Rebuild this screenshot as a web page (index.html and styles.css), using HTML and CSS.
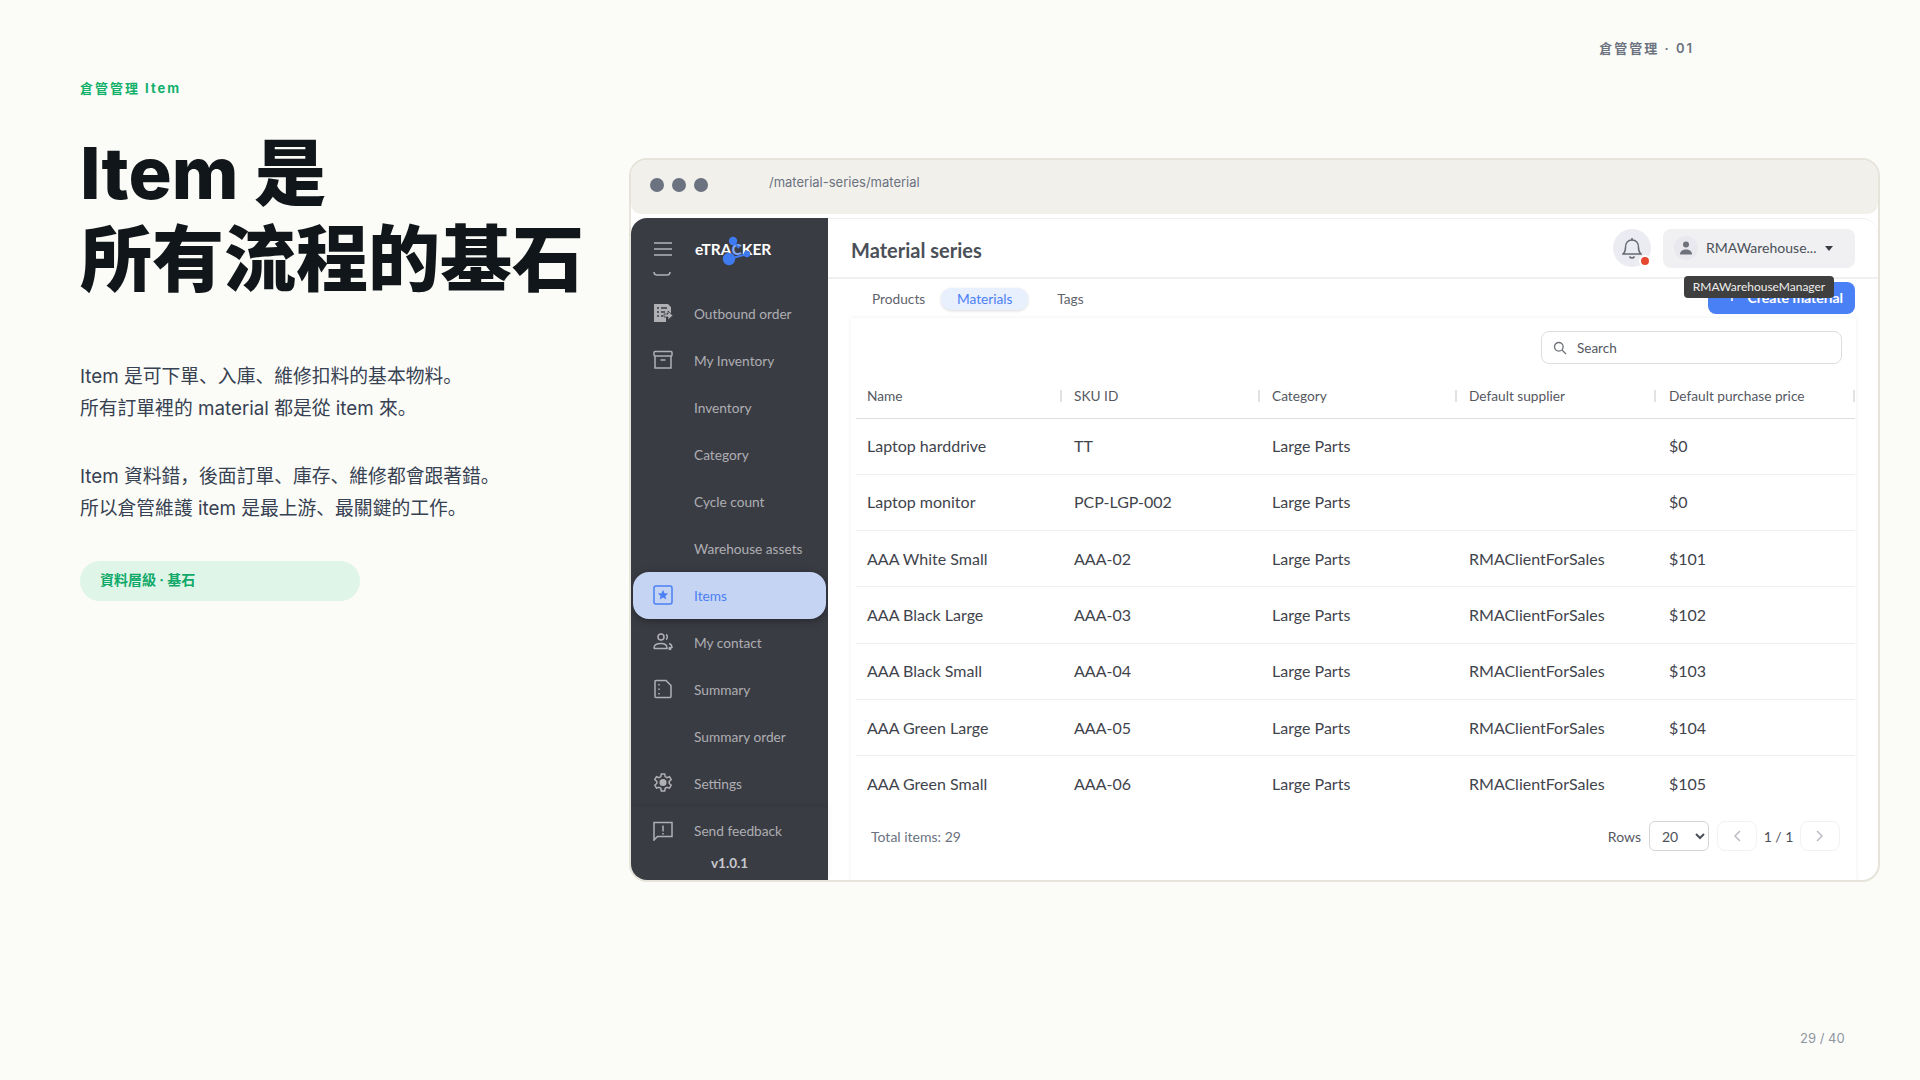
FILE: index.html
```html
<!DOCTYPE html>
<html lang="zh">
<head>
  <meta charset="UTF-8">
  <title>倉管管理 Item</title>
  <link rel="stylesheet" href="styles.css">
</head>
<body>
  <div class="slide">
    <div class="topbar">倉管管理 · 01</div>
    <div class="columns">
      <div class="intro">
        <div class="eyebrow">倉管管理 Item</div>
        <h1 class="headline">Item 是<br>所有流程的基石</h1>
        <p class="copy">Item 是可下單、入庫、維修扣料的基本物料。<br>所有訂單裡的 material 都是從 item 來。</p>
        <p class="copy">Item 資料錯，後面訂單、庫存、維修都會跟著錯。<br>所以倉管維護 item 是最上游、最關鍵的工作。</p>
        <div class="pill">資料層級 · 基石</div>
      </div>

      <div class="window">
        <div class="chrome">
          <div class="dots"><i></i><i></i><i></i></div>
          <div class="url">/material-series/material</div>
        </div>
        <div class="app">
          <aside class="sidebar">
            <div class="side-head">
              <svg class="burger" width="18" height="14" viewBox="0 0 18 14"><path d="M0 1h18M0 7h18M0 13h18" stroke="#b4b4b8" stroke-width="1.4"/></svg>
              <div class="logo">
                <span>eTRA<b class="logo-c">C</b>KER</span>
                <svg class="logo-nodes" width="40" height="36" viewBox="0 0 40 36">
                  <path d="M19 6 L25 13 M15 24 L33 19" stroke="#3f7bf0" stroke-width="2" fill="none"/>
                  <circle cx="19" cy="6" r="4.200" fill="#3f7bf0"/>
                  <circle cx="15" cy="24" r="6.200" fill="#3f7bf0"/>
                  <circle cx="33" cy="19" r="3.200" fill="#3f7bf0"/>
                </svg>
              </div>
            </div>
            <div class="nav">
              <div class="nav-clip"><svg width="18" height="6" viewBox="0 0 18 6"><path d="M1 0c0 2 1 3 3 3h10c2 0 3-1 3-3" fill="none" stroke="#b0b0b4" stroke-width="1.5"/></svg></div>
              <div class="nav-row">
                <svg class="nav-icon" viewBox="0 0 20 20"><path d="M1 1h14l3 3v6h-4v3l-1 0v6H1z" fill="#b0b0b4"/><path d="M4 5h2M8 5h6M4 9h2M8 9h4M4 13h2M8 13h2" stroke="#3a3c44" stroke-width="1.4"/><path d="M11 11h4V8l5 4.5-5 4.500V14h-4z" fill="#b0b0b4" stroke="#3a3c44" stroke-width=".8"/></svg>
                <span>Outbound order</span>
              </div>
              <div class="nav-row">
                <svg class="nav-icon" viewBox="0 0 20 20" fill="none" stroke="#b0b0b4" stroke-width="1.5"><rect x="1" y="1.500" width="18" height="4.500" rx="1"/><path d="M2 6v12h16V6M7.500 10h5"/></svg>
                <span>My Inventory</span>
              </div>
              <div class="nav-row"><span class="nav-icon"></span><span>Inventory</span></div>
              <div class="nav-row"><span class="nav-icon"></span><span>Category</span></div>
              <div class="nav-row"><span class="nav-icon"></span><span>Cycle count</span></div>
              <div class="nav-row"><span class="nav-icon"></span><span>Warehouse assets</span></div>
              <div class="nav-row active">
                <svg class="nav-icon" viewBox="0 0 20 20"><rect x="1" y="1" width="18" height="18" rx="2" fill="none" stroke="#4a80f5" stroke-width="1.500"/><path d="M10 4.800l1.500 3.400 3.700.3-2.800 2.400.9 3.600-3.300-1.900-3.300 1.900.9-3.600-2.800-2.400 3.700-.3z" fill="#4a80f5"/></svg>
                <span>Items</span>
              </div>
              <div class="nav-row">
                <svg class="nav-icon" viewBox="0 0 20 20" fill="none" stroke="#b0b0b4" stroke-width="1.500"><circle cx="8" cy="5" r="3"/><path d="M13 2.500c1.700.6 1.700 4.400 0 5"/><path d="M1 16c0-3 3-4.500 7-4.500s6 1.500 6 4.500v.500H1.500z"/><path d="M16 11.500c2 .6 3 2 3 4.500"/><circle cx="17" cy="16.500" r=".9" fill="#b0b0b4"/></svg>
                <span>My contact</span>
              </div>
              <div class="nav-row">
                <svg class="nav-icon" viewBox="0 0 20 20" fill="none" stroke="#b0b0b4" stroke-width="1.500"><path d="M2 2.500a1 1 0 0 1 1-1h10l5 5v11a1 1 0 0 1-1 1H3a1 1 0 0 1-1-1z"/><path d="M6 5v1.500M6 9.500V11M6 14v1.500"/></svg>
                <span>Summary</span>
              </div>
              <div class="nav-row"><span class="nav-icon"></span><span>Summary order</span></div>
              <div class="nav-row">
                <svg class="nav-icon" viewBox="0 0 20 20" fill="none" stroke="#b0b0b4" stroke-width="1.500"><path d="M8.300 1h3.400l.5 2.600 1.800 1 2.500-.9 1.700 3-2 1.700v2.100l2 1.700-1.700 3-2.500-.9-1.800 1-.5 2.700H8.300l-.5-2.700-1.800-1-2.500.9-1.700-3 2-1.700V8.400l-2-1.700 1.700-3 2.500.9 1.800-1z"/><circle cx="10" cy="9.500" r="2.800" fill="#b0b0b4"/></svg>
                <span>Settings</span>
              </div>
            </div>
            <div class="side-foot">
              <div class="nav-row">
                <svg class="nav-icon" viewBox="0 0 20 20" fill="none" stroke="#b0b0b4" stroke-width="1.500"><path d="M1 1.500h18v14H4.500L1 19z"/><path d="M10 4.500v6M10 12v1.500"/></svg>
                <span>Send feedback</span>
              </div>
              <div class="version">v1.0.1</div>
            </div>
          </aside>

          <main class="main">
            <header class="main-head">
              <div class="main-title">Material series</div>
              <div class="bell">
                <svg width="20" height="22" viewBox="0 0 20 22" fill="none" stroke="#666a72" stroke-width="1.500"><path d="M1 17c2-1.500 2.500-3 2.500-6.500C3.500 6 6 3 10 3s6.500 3 6.500 7.500c0 3.500.5 5 2.500 6.500z"/><path d="M10 1v2M7.500 19.500c.6 1 1.500 1.500 2.500 1.500s1.900-.5 2.500-1.500"/></svg>
                <i class="bell-dot"></i>
              </div>
              <div class="user-wrap">
                <div class="user">
                  <span class="avatar"><svg width="14" height="14" viewBox="0 0 14 14" fill="#6f727a"><circle cx="7" cy="3.600" r="3"/><path d="M1 13.500c0-3.500 2.500-5 6-5s6 1.500 6 5z"/></svg></span>
                  <span class="user-name">RMAWarehouse...</span>
                  <span class="caret"></span>
                </div>
                <div class="tooltip">RMAWarehouseManager</div>
              </div>
            </header>

            <div class="subbar">
              <div class="tabs">
                <div class="tab">Products</div>
                <div class="tab tab-on">Materials</div>
                <div class="tab">Tags</div>
              </div>
              <div class="create"><span class="plus">+</span>Create material</div>
            </div>

            <section class="card">
              <div class="search-row">
                <div class="search">
                  <svg width="14" height="14" viewBox="0 0 14 14" fill="none" stroke="#6f727a" stroke-width="1.300"><circle cx="5.800" cy="5.800" r="4.300"/><path d="M9 9l4 4"/></svg>
                  <span>Search</span>
                </div>
              </div>
              <table class="grid">
                <colgroup><col class="c1"><col class="c2"><col class="c3"><col class="c4"><col class="c5"></colgroup>
                <thead>
                  <tr><th>Name</th><th>SKU ID</th><th>Category</th><th>Default supplier</th><th>Default purchase price</th></tr>
                </thead>
                <tbody>
                  <tr><td>Laptop harddrive</td><td>TT</td><td>Large Parts</td><td></td><td>$0</td></tr>
                  <tr><td>Laptop monitor</td><td>PCP-LGP-002</td><td>Large Parts</td><td></td><td>$0</td></tr>
                  <tr><td>AAA White Small</td><td>AAA-02</td><td>Large Parts</td><td>RMAClientForSales</td><td>$101</td></tr>
                  <tr><td>AAA Black Large</td><td>AAA-03</td><td>Large Parts</td><td>RMAClientForSales</td><td>$102</td></tr>
                  <tr><td>AAA Black Small</td><td>AAA-04</td><td>Large Parts</td><td>RMAClientForSales</td><td>$103</td></tr>
                  <tr><td>AAA Green Large</td><td>AAA-05</td><td>Large Parts</td><td>RMAClientForSales</td><td>$104</td></tr>
                  <tr><td>AAA Green Small</td><td>AAA-06</td><td>Large Parts</td><td>RMAClientForSales</td><td>$105</td></tr>
                </tbody>
              </table>
              <div class="pager">
                <div class="total">Total items: 29</div>
                <div class="rows-label">Rows</div>
                <select class="rows-select"><option>20</option></select>
                <div class="page-btn"><svg width="10" height="12" viewBox="0 0 10 12" fill="none" stroke="#bcbec4" stroke-width="1.500"><path d="M8 1L3 6l5 5"/></svg></div>
                <div class="page-num">1 / 1</div>
                <div class="page-btn"><svg width="10" height="12" viewBox="0 0 10 12" fill="none" stroke="#bcbec4" stroke-width="1.500"><path d="M2 1l5 5-5 5"/></svg></div>
              </div>
            </section>
          </main>
        </div>
      </div>
    </div>
    <div class="pagenum">29 / 40</div>
  </div>
</body>
</html>
```

FILE: styles.css
```css
* {
    box-sizing: border-box;
}

body {
    margin: 0;
    background: #fbfcf8;
    font-family: Inter, "Noto Sans CJK SC", sans-serif;
}

.slide {
    width: 1920px;
    height: 1080px;
    overflow: hidden;
    display: flex;
    flex-direction: column;
}

.topbar {
    height: 64px;
    padding: 40px 226px 0 0;
    text-align: right;
    font-size: 13px;
    line-height: 16px;
    font-weight: 600;
    letter-spacing: 2px;
    color: #6b7280;
}

.columns {
    display: flex;
    height: 974px;
    padding-left: 80px;
}

.intro {
    width: 549px;
    flex-shrink: 0;
}

.eyebrow {
    margin-top: 16px;
    font-size: 13px;
    line-height: 16px;
    font-weight: 700;
    letter-spacing: 2px;
    color: #10b06b;
}

.headline {
    margin: 34px 0 59px;
    font-size: 72px;
    line-height: 86px;
    font-weight: 800;
    color: #101619;
}

.copy {
    margin: 0 0 36px;
    font-size: 18.800px;
    line-height: 32px;
    color: #374151;
}

.pill {
    width: 280px;
    height: 40px;
    margin-top: 35px;
    padding-left: 20px;
    border-radius: 20px;
    background: #def5e8;
    font-size: 14px;
    line-height: 38px;
    font-weight: 700;
    color: #10a969;
}

/* browser frame */
.window {
    width: 1251px;
    height: 724px;
    margin-top: 94px;
    border: 2px solid #e6e3da;
    border-radius: 18px;
    background: #fff;
    overflow: hidden;
}

.chrome {
    height: 54px;
    display: flex;
    padding: 0 0 0 19px;
    background: #f2f0eb;
    border-radius: 0 0 10px 10px;
}

.dots {
    display: flex;
    gap: 8px;
    margin-top: 18px;
}

.dots i {
    width: 14px;
    height: 14px;
    border-radius: 50%;
    background: #6b7280;
}

.url {
    margin: 14px 0 0 61px;
    font-size: 13px;
    line-height: 16px;
    color: #6b7280;
}

.app {
    height: 662px;
    margin-top: 4px;
    display: flex;
    font-family: Lato, "Open Sans", sans-serif;
}

/* sidebar */
.sidebar {
    width: 197px;
    flex-shrink: 0;
    display: flex;
    flex-direction: column;
    background: #3a3c44;
    border-radius: 16px 0 0 0;
    color: #aeaeb2;
}

.side-head {
    height: 54px;
    flex-shrink: 0;
    display: flex;
    align-items: center;
    padding: 8px 0 0 23px;
}

.logo {
    position: relative;
    margin-left: 23px;
    font-size: 15.500px;
    font-weight: 700;
    color: #fff;
}

.logo-c {
    color: #7ea6f8;
}

.logo-nodes {
    position: absolute;
    left: 19px;
    top: -5px;
}

.nav {
    flex: 1;
    overflow: hidden;
}

.nav-clip {
    height: 17.500px;
    padding-left: 22px;
    line-height: 0;
}

.nav-row {
    height: 47px;
    margin: 0 2px;
    display: flex;
    align-items: center;
    gap: 21px;
    padding-left: 20px;
    font-size: 13.700px;
    border-radius: 16px;
}

.nav-icon {
    width: 20px;
    height: 20px;
    flex-shrink: 0;
}

.nav-row.active {
    background: #c5d4f2;
    color: #4a80f5;
    box-shadow: 0 2px 8px rgba(0, 0, 0, 0.35);
}

.side-foot {
    height: 73px;
    flex-shrink: 0;
    box-shadow: 0 -3px 6px rgba(0, 0, 0, 0.06);
}

.version {
    text-align: center;
    font-size: 13.500px;
    line-height: 18px;
    font-weight: 700;
    color: #c8c8cc;
}

/* main area */
.main {
    flex: 1;
    min-width: 0;
    display: flex;
    flex-direction: column;
    border-top: 1px solid #eeeeee;
    border-top-right-radius: 16px;
}

.main-head {
    height: 60px;
    flex-shrink: 0;
    display: flex;
    align-items: center;
    padding-right: 23px;
    padding-left: 23px;
    border-bottom: 2px solid #f0f0f0;
}

.main-title {
    flex: 1;
    padding-top: 3px;
    font-size: 20px;
    font-weight: 700;
    color: #4b5058;
}

.bell {
    position: relative;
    width: 38px;
    height: 38px;
    margin-right: 12px;
    display: flex;
    align-items: center;
    justify-content: center;
    border-radius: 50%;
    background: #ebecf1;
}

.bell-dot {
    position: absolute;
    right: 0;
    bottom: 0;
    width: 12px;
    height: 12px;
    border: 2px solid #fff;
    border-radius: 50%;
    background: #e5472f;
}

.user-wrap {
    position: relative;
}

.user {
    width: 192px;
    height: 39px;
    display: flex;
    align-items: center;
    padding-left: 11px;
    border-radius: 8px;
    background: #f0f0f2;
    font-size: 14px;
    color: #4b5058;
}

.avatar {
    width: 24px;
    height: 24px;
    display: flex;
    align-items: center;
    justify-content: center;
    border-radius: 50%;
    background: #e8e8ee;
}

.user-name {
    margin-left: 8px;
    width: 117px;
    padding-bottom: 1px;
    white-space: nowrap;
}

.caret {
    margin-left: 2px;
    border-left: 4px solid transparent;
    border-right: 4px solid transparent;
    border-top: 5px solid #3a3c44;
}

.tooltip {
    position: absolute;
    z-index: 2;
    left: 21px;
    top: 47px;
    width: 150px;
    height: 22px;
    border-radius: 4px;
    background: #3f3f3f;
    font-size: 12px;
    line-height: 22px;
    text-align: center;
    color: #eeeeee;
}

.subbar {
    height: 39px;
    flex-shrink: 0;
    display: flex;
    justify-content: space-between;
    padding: 3px 23px 0 31px;
}

.tabs {
    display: flex;
    align-items: flex-start;
    gap: 16px;
    padding-top: 6px;
}

.tab {
    height: 22px;
    padding: 0 13px;
    font-size: 13.700px;
    line-height: 21px;
    color: #5f636b;
}

.tab:first-child {
    padding-left: 13px;
    padding-right: 0;
}

.tab-on {
    width: 87px;
    padding: 0;
    text-align: center;
    border-radius: 10px;
    background: #e8effd;
    color: #4a80f5;
    box-shadow: 0 1px 3px rgba(0, 0, 0, 0.15);
}

.create {
    width: 147px;
    height: 32px;
    padding-left: 18px;
    border-radius: 8px;
    background: #4a80f5;
    font-size: 14px;
    font-weight: 700;
    line-height: 32px;
    color: #fff;
    white-space: nowrap;
}

.plus {
    font-size: 20px;
    font-weight: 400;
    line-height: 20px;
    margin-right: 10px;
}

.card {
    flex: 1;
    margin: 0 22px 0 23px;
    padding: 13px 0 0 5px;
    background: #fff;
    box-shadow: 0 0 4px rgba(120, 130, 170, 0.14);
}

.search-row {
    display: flex;
    justify-content: flex-end;
    padding-right: 14px;
}

.search {
    width: 301px;
    height: 33px;
    display: flex;
    align-items: center;
    gap: 10px;
    padding-left: 11px;
    border: 1px solid #dddddd;
    border-radius: 8px;
    font-size: 13.500px;
    color: #55585f;
}

.grid {
    width: 999px;
    margin-top: 21px;
    border-collapse: collapse;
    table-layout: fixed;
}

.c1 { width: 206px; }
.c2 { width: 198px; }
.c3 { width: 197px; }
.c4 { width: 199px; }
.c5 { width: 199px; }

.grid th {
    height: 33px;
    padding: 0 0 11px 12px;
    border-bottom: 1px solid #dedede;
    font-size: 13.700px;
    font-weight: 400;
    text-align: left;
    color: #55585f;
    position: relative;
}

.grid th:first-child,
.grid td:first-child {
    padding-left: 11px;
}

.grid th:last-child,
.grid td:last-child {
    padding-left: 13px;
}

.grid th::after {
    content: "";
    position: absolute;
    right: 0;
    top: 5px;
    width: 2px;
    height: 12px;
    background: #e2e2e2;
}

.grid td {
    height: 56.330px;
    padding: 0 0 1px 12px;
    border-bottom: 1px solid #eeeeee;
    font-size: 16px;
    color: #3f444c;
}

.grid tbody tr:last-child td {
    border-bottom: 0;
}

.pager {
    display: flex;
    align-items: center;
    height: 30px;
    margin-top: 9px;
    padding: 0 16px 0 15px;
    font-size: 14px;
    color: #55585f;
}

.total {
    flex: 1;
    color: #6b7280;
}

.rows-select {
    width: 60px;
    height: 30px;
    margin: 0 8px 0 8px;
    padding-left: 8px;
    border: 1px solid #d4d4d4;
    border-radius: 6px;
    background: #fff;
    font-family: inherit;
    font-size: 14px;
    color: #4b5058;
}

.page-btn {
    width: 40px;
    height: 30px;
    display: flex;
    align-items: center;
    justify-content: center;
    border: 1px solid #f2f2f2;
    border-radius: 8px;
}

.page-num {
    width: 43px;
    text-align: center;
    color: #4b5058;
}

.pagenum {
    position: absolute;
    left: 1800px;
    top: 1030px;
    font-size: 13px;
    line-height: 16px;
    color: #8f96a3;
}
```
